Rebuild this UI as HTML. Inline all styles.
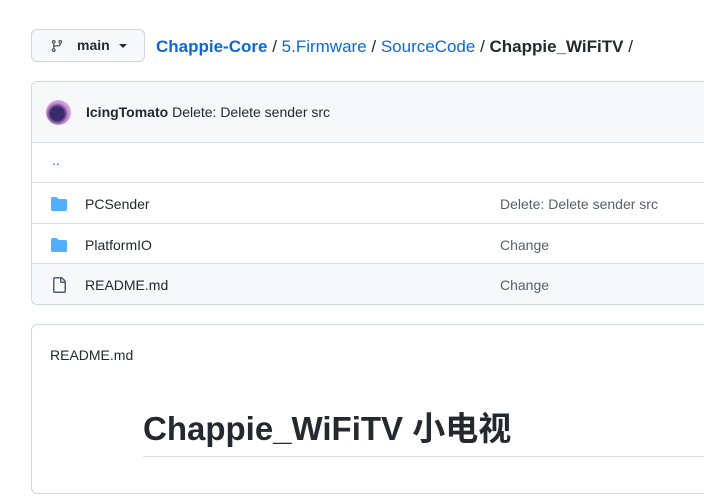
<!DOCTYPE html>
<html><head><meta charset="utf-8"><style>
body{margin:0;width:704px;height:500px;overflow:hidden;background:#fff;font-family:"Liberation Sans","Noto Sans CJK SC",sans-serif;color:#24292f;position:relative}
.abs{position:absolute}
.btn{left:31px;top:29px;width:114px;height:33px;border:1px solid #d0d7de;border-radius:6px;background:#f6f8fa;box-sizing:border-box}
.crumb{left:156px;top:37px;font-size:17px;white-space:nowrap}
.crumb a{color:#0969da;text-decoration:none}
.box{left:31px;top:81px;width:690px;height:224px;border:1px solid #d0d7de;border-radius:6px;box-sizing:border-box;overflow:hidden}
.row{position:absolute;left:0;right:0;border-top:1px solid #d8dee4;font-size:14px}
.readme{left:31px;top:324px;width:690px;height:170px;border:1px solid #d0d7de;border-radius:6px;box-sizing:border-box}
</style></head><body>
<div class="abs btn">
<svg class="abs" style="left:18px;top:9px" width="14" height="14" viewBox="0 0 16 16"><path fill="#57606a" d="M9.5 3.25a2.25 2.25 0 1 1 3 2.122V6A2.5 2.5 0 0 1 10 8.5H6a1 1 0 0 0-1 1v1.128a2.251 2.251 0 1 1-1.5 0V5.372a2.25 2.25 0 1 1 1.5 0v1.836A2.5 2.5 0 0 1 6 7h4a1 1 0 0 0 1-1v-.628A2.25 2.25 0 0 1 9.5 3.250Zm-6 0a.75.75 0 1 0 1.5 0 .75.75 0 0 0-1.5 0Zm8.25-.75a.75.75 0 1 0 0 1.5.75.75 0 0 0 0-1.5ZM4.25 12a.75.75 0 1 0 0 1.5.75.75 0 0 0 0-1.5Z"/></svg>
<span class="abs" style="left:45px;top:7px;font-size:14px;font-weight:bold">main</span>
<span class="abs" style="left:87px;top:14px;width:0;height:0;border-left:4px solid transparent;border-right:4px solid transparent;border-top:4px solid #24292f"></span>
</div>
<div class="abs crumb"><a style="font-weight:bold">Chappie-Core</a> / <a>5.Firmware</a> / <a>SourceCode</a> / <b>Chappie_WiFiTV</b> /</div>
<div class="abs box">
<div class="abs" style="left:0;top:0;right:0;height:60px;background:#f6f8fa"></div>
<div class="abs" style="left:14px;top:18px;width:25px;height:25px;border-radius:50%;background:radial-gradient(circle at 45% 55%,#3a2a6a 0 35%,#c58ad0 55%,#e8c6ee 80%)"></div>
<div class="abs" style="left:54px;top:22px;font-size:14px"><b>IcingTomato</b> Delete: Delete sender src</div>
<div class="row" style="top:60px;height:40px"><span class="abs" style="left:20px;top:9px;color:#0969da">..</span></div>
<div class="row" style="top:100px;height:40px">
<svg class="abs" style="left:19px;top:13px" width="16" height="16" viewBox="0 0 16 16"><path fill="#54aeff" d="M1.75 1A1.75 1.75 0 0 0 0 2.75v10.5C0 14.216.784 15 1.75 15h12.5A1.75 1.75 0 0 0 16 13.25v-8.5A1.75 1.75 0 0 0 14.25 3H7.5a.25.25 0 0 1-.2-.1l-.9-1.200C6.070 1.260 5.550 1 5 1H1.75Z"/></svg>
<span class="abs" style="left:53px;top:13px">PCSender</span><span class="abs" style="left:468px;top:13px;color:#57606a">Delete: Delete sender src</span></div>
<div class="row" style="top:141px;height:40px">
<svg class="abs" style="left:19px;top:13px" width="16" height="16" viewBox="0 0 16 16"><path fill="#54aeff" d="M1.75 1A1.75 1.75 0 0 0 0 2.75v10.5C0 14.216.784 15 1.75 15h12.5A1.75 1.75 0 0 0 16 13.25v-8.5A1.75 1.75 0 0 0 14.25 3H7.5a.25.25 0 0 1-.2-.1l-.9-1.200C6.070 1.260 5.550 1 5 1H1.75Z"/></svg>
<span class="abs" style="left:53px;top:13px">PlatformIO</span><span class="abs" style="left:468px;top:13px;color:#57606a">Change</span></div>
<div class="row" style="top:181px;height:43px;background:#f6f8fa">
<svg class="abs" style="left:19px;top:13px" width="16" height="16" viewBox="0 0 16 16"><path fill="#57606a" d="M2 1.75C2 .784 2.784 0 3.75 0h6.586c.464 0 .909.184 1.237.513l2.914 2.914c.329.328.513.773.513 1.237v9.586A1.75 1.75 0 0 1 13.25 16h-9.5A1.75 1.75 0 0 1 2 14.25Zm1.75-.25a.25.25 0 0 0-.25.25v12.5c0 .138.112.25.25.25h9.5a.25.25 0 0 0 .25-.25V6h-2.75A1.75 1.75 0 0 1 9 4.25V1.5Zm6.75.062V4.25c0 .138.112.25.25.25h2.688Z"/></svg>
<span class="abs" style="left:53px;top:13px">README.md</span><span class="abs" style="left:468px;top:13px;color:#57606a">Change</span></div>
</div>
<div class="abs readme">
<div class="abs" style="left:18px;top:22px;font-size:14px">README.md</div>
<div class="abs" style="left:111px;top:77px;font-size:33px;font-weight:bold;white-space:nowrap">Chappie_WiFiTV 小电视</div>
<div class="abs" style="left:111px;top:131px;right:0;border-top:1px solid #d8dee4"></div>
</div>
</body></html>
